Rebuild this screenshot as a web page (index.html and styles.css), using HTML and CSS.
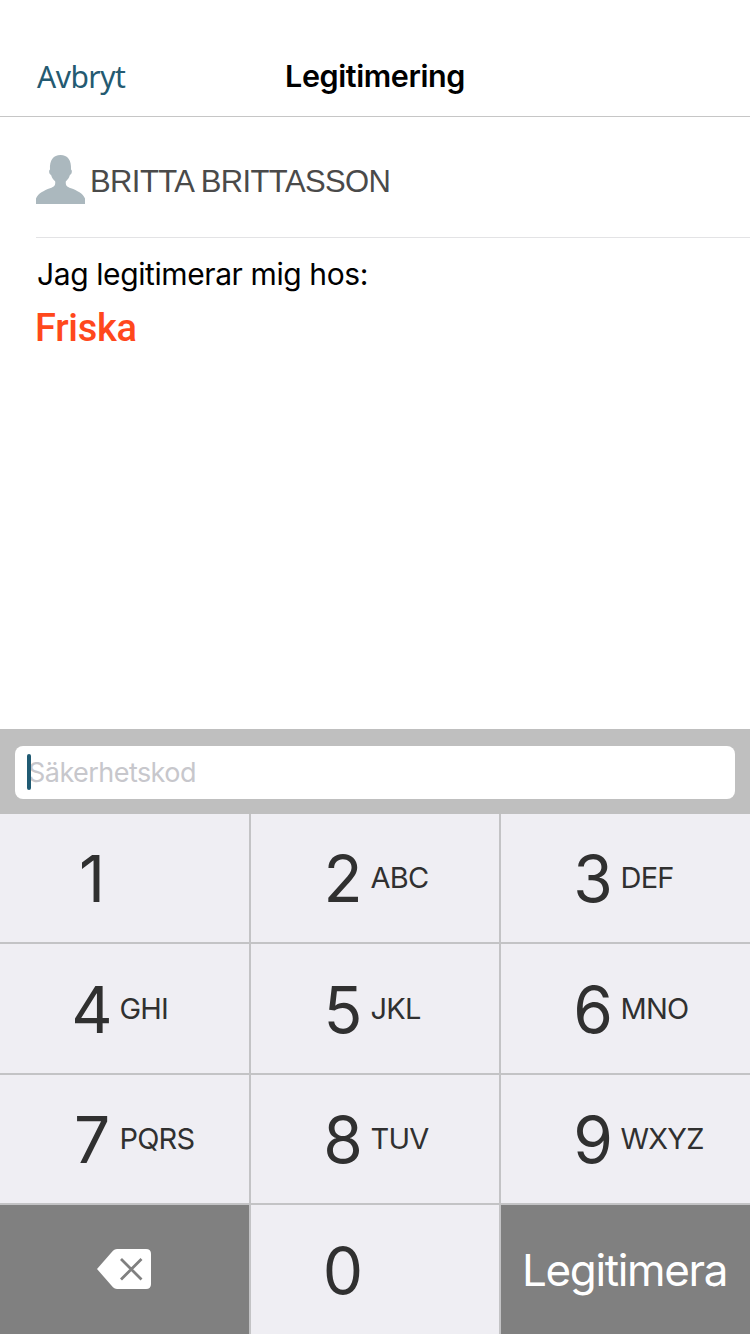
FILE: index.html
```html
<!DOCTYPE html>
<html lang="sv">
<head>
<meta charset="utf-8">
<title>Legitimering</title>
<link rel="stylesheet" href="styles.css">
</head>
<body>
<div class="screen">
  <header class="navbar">
    <a class="cancel">Avbryt</a>
    <h1 class="title">Legitimering</h1>
  </header>
  <main class="content">
    <div class="user">
      <svg class="avatar" viewBox="0 0 49 49" width="49" height="49"><path d="M0 49V43.500C2 38.500 8 35.500 14 33.300C18.500 31.600 19.500 30.500 19.200 26.500C17.300 24.500 16 23 15.200 20.200C13 19.200 12.500 15.500 14 14.600C13.400 5 17.500 0 24.500 0S35.600 5 35 14.600C36.500 15.500 36 19.200 33.800 20.200C33 23 31.700 24.500 29.800 26.500C29.500 30.500 30.500 31.600 35 33.300C41 35.500 47 38.500 49 43.500V49Z"/></svg>
      <span class="name">BRITTA BRITTASSON</span>
    </div>
    <p class="label">Jag legitimerar mig hos:</p>
    <p class="company">Friska</p>
  </main>
  <div class="entry">
    <div class="field"><span class="caret"></span><span class="placeholder">Säkerhetskod</span></div>
  </div>
  <div class="keypad">
    <div class="key"><span class="digit">1</span></div>
    <div class="key"><span class="digit">2</span><span class="letters">ABC</span></div>
    <div class="key"><span class="digit">3</span><span class="letters">DEF</span></div>
    <div class="key"><span class="digit">4</span><span class="letters">GHI</span></div>
    <div class="key"><span class="digit">5</span><span class="letters">JKL</span></div>
    <div class="key"><span class="digit">6</span><span class="letters">MNO</span></div>
    <div class="key"><span class="digit">7</span><span class="letters">PQRS</span></div>
    <div class="key"><span class="digit">8</span><span class="letters">TUV</span></div>
    <div class="key"><span class="digit">9</span><span class="letters">WXYZ</span></div>
    <div class="key dark erase"><svg viewBox="0 0 54 40" width="54" height="40"><path fill="#fff" d="M0 20 16 1.800Q17.600 0 20 0H49Q54 0 54 5V35Q54 40 49 40H20Q17.600 40 16 38.200Z"/><path fill="none" stroke="#808080" stroke-width="2.800" d="M24 10 44.500 30.500M44.500 10 24 30.500"/></svg></div>
    <div class="key"><span class="digit">0</span></div>
    <div class="key dark submit">Legitimera</div>
  </div>
</div>
</body>
</html>
```
FILE: styles.css
```css
* { box-sizing: border-box; margin: 0; padding: 0; }
body { background: #fff; font-family: Inter, "Liberation Sans", sans-serif; }
.screen { width: 750px; height: 1334px; display: flex; flex-direction: column; overflow: hidden; }
.navbar { height: 117px; border-bottom: 1px solid #c6c6c6; padding-top: 36px; display: grid; grid-template-columns: 1fr auto 1fr; line-height: 80px; }
.cancel { padding: 1px 0 0 37px; font-family: "Noto Sans", sans-serif; font-size: 30px; letter-spacing: -0.5px; color: #245a71; }
.title { font-size: 30.500px; font-weight: 600; letter-spacing: -0.4px; color: #000; }
.content { flex: 1; padding-left: 36px; }
.user { height: 121px; border-bottom: 1px solid #e3e3e5; display: flex; align-items: center; padding-top: 5px; }
.avatar { fill: #abb8be; }
.name { font-family: "Liberation Sans", sans-serif; font-size: 31px; letter-spacing: -0.6px; color: #4a4a4a; margin-left: 5px; padding-top: 5px; }
.label { font-size: 30px; line-height: 40px; letter-spacing: -0.4px; margin-top: 16px; padding-left: 1px; color: #000; }
.company { font-family: Roboto, sans-serif; font-weight: 500; font-size: 38px; line-height: 48px; letter-spacing: -0.3px; margin: 10px 0 0 -1px; color: #ff481c; }
.entry { height: 85px; background: #bfbfbf; padding: 17px 15px 15px; }
.field { height: 53px; background: #fff; border-radius: 8px; display: flex; align-items: center; padding-left: 12px; }
.caret { width: 4px; height: 36px; border-radius: 2px; background: #205b73; position: relative; top: -1px; z-index: 1; }
.placeholder { color: #c7c7cc; font-size: 27px; letter-spacing: -0.55px; margin-left: -3px; }
.keypad { height: 520px; display: grid; grid-template-columns: 249px 248px 249px; grid-template-rows: 128px 129px 128px 129px; gap: 2px; background: #c3c3c5; }
.key { background: #efeef3; color: #303030; display: flex; align-items: center; padding-left: 71px; }
.digit { width: 42px; text-align: center; font-size: 64px; line-height: 80px; padding-top: 2px; }
.letters { font-size: 29px; line-height: 40px; margin-left: 6.500px; letter-spacing: -0.8px; }
.dark { background: #808080; color: #fff; }
.erase { padding-left: 97px; padding-bottom: 1px; }
.submit { padding: 1px 0 0 21px; font-size: 44px; letter-spacing: -1.35px; white-space: nowrap; }
```
